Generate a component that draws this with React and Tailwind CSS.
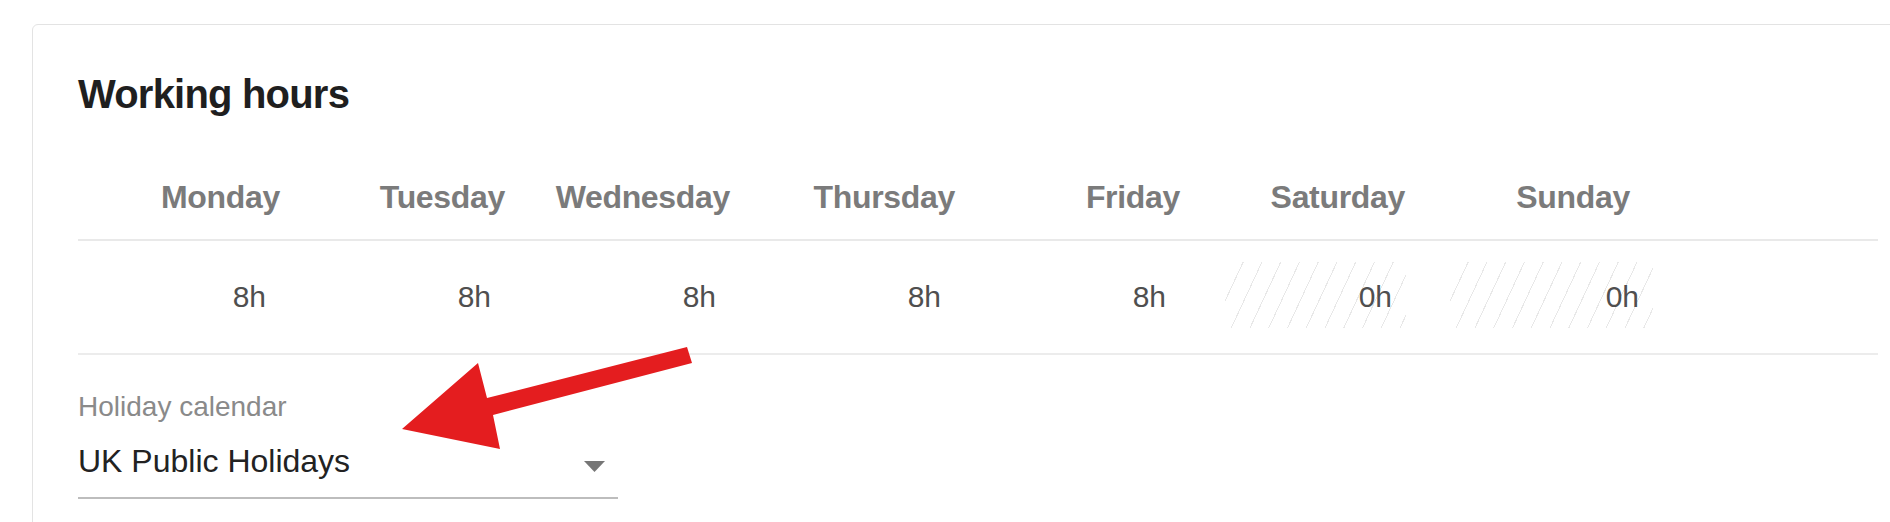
import React from "react";

const days = [
  { name: "Monday", hours: "8h", off: false, last: false },
  { name: "Tuesday", hours: "8h", off: false, last: false },
  { name: "Wednesday", hours: "8h", off: false, last: false },
  { name: "Thursday", hours: "8h", off: false, last: false },
  { name: "Friday", hours: "8h", off: false, last: false },
  { name: "Saturday", hours: "0h", off: true, last: false },
  { name: "Sunday", hours: "0h", off: true, last: true },
];

export default function App() {
  return (
    <div className="relative w-[1890px] h-[522px] overflow-hidden bg-white font-['Liberation_Sans',Arial,sans-serif]">
      <div className="ml-8 mt-6 w-[1892px] rounded-md border border-[#e3e3e3] px-[45px] pt-[45px] pb-10">
        <h2 className="text-[40px] leading-[48px] font-bold tracking-[-0.02em] text-[#1f1f1f]">
          Working hours
        </h2>

        <div className="mt-[59px] border-b-2 border-[#e9e9e9] pb-[22px]">
          <div className="grid grid-cols-[repeat(7,225px)]">
            {days.map((d) => (
              <div
                key={d.name}
                className="pr-[23px] text-right text-[32px] leading-[40px] font-bold tracking-[-0.01em] text-[#7b7b7b]"
              >
                {d.name}
              </div>
            ))}
          </div>
        </div>

        <div className="border-b-2 border-[#ececec] pt-[21px] pb-[25px]">
          <div className="grid grid-cols-[repeat(7,225px)]">
            {days.map((d) => (
              <div
                key={d.name}
                className={d.last ? "pl-[22px]" : "px-[22px]"}
              >
                <div
                  className={
                    d.off
                      ? "flex h-[66px] items-center justify-end pr-[14px] bg-[repeating-linear-gradient(115deg,transparent_0px,transparent_16px,#e8e8e8_16px,#e8e8e8_17px)]"
                      : "flex h-[66px] items-center justify-end pr-[15px]"
                  }
                >
                  <span className="mt-[3px] text-[30px] leading-[36px] text-[#4f4f4f]">
                    {d.hours}
                  </span>
                </div>
              </div>
            ))}
          </div>
        </div>

        <div className="mt-9 w-[540px]">
          <div className="text-[28px] leading-[32px] text-[#8a8a8a]">Holiday calendar</div>
          <div className="mt-[18px] flex items-center justify-between border-b-2 border-[#bdbdbd] pb-4 pr-[13px]">
            <span className="text-[32px] leading-[40px] text-[#222222]">UK Public Holidays</span>
            <svg className="mt-[10px]" width="21" height="11" viewBox="0 0 21 11">
              <polygon points="0,0 21,0 10.5,11" fill="#767676" />
            </svg>
          </div>
        </div>
      </div>

      <svg
        className="pointer-events-none absolute left-0 top-0"
        width="1890"
        height="522"
        viewBox="0 0 1890 522"
      >
        <polygon
          points="402,429 478,363 487,398 687,347 692,363 493,415 500,449"
          fill="#e41d1f"
        />
      </svg>
    </div>
  );
}
